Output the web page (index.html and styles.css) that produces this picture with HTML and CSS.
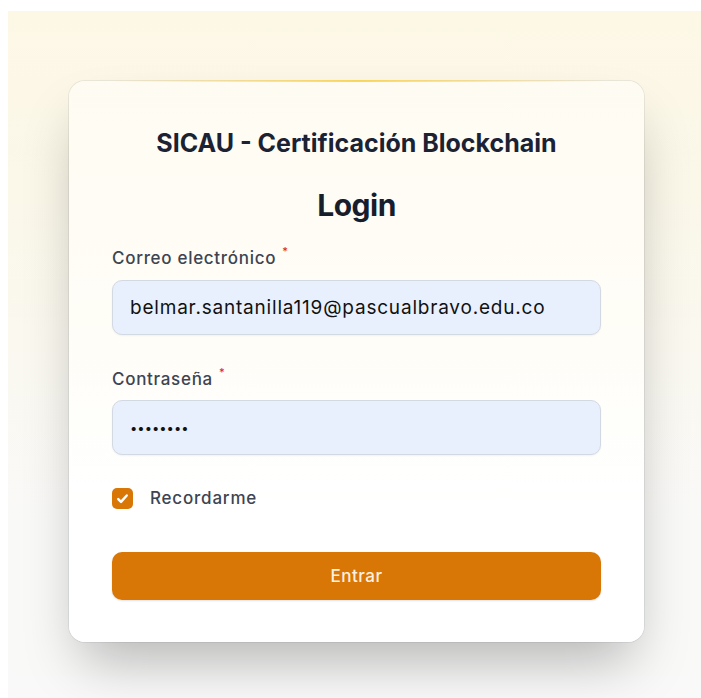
FILE: index.html
```html
<!DOCTYPE html>
<html lang="es">
<head>
<meta charset="utf-8">
<title>Login - SICAU</title>
<link rel="stylesheet" href="styles.css">
</head>
<body>
<div class="layout">
  <main class="card">
    <div class="brand">SICAU - Certificación Blockchain</div>
    <h1 class="heading">Login</h1>
    <form class="form">
      <div class="field">
        <label class="label" for="email">Correo electrónico<sup class="req">*</sup></label>
        <input class="input" id="email" type="email" value="belmar.santanilla119@pascualbravo.edu.co">
      </div>
      <div class="field field-gap">
        <label class="label" for="password">Contraseña<sup class="req">*</sup></label>
        <div class="input input-secret" id="password">••••••••</div>
      </div>
      <label class="remember">
        <span class="checkbox">
          <svg viewBox="0 0 16 16" width="17" height="17"><path d="M4 8.6l2.6 2.6 5.4-6" fill="none" stroke="#fff" stroke-width="2.3" stroke-linecap="round" stroke-linejoin="round"/></svg>
        </span>
        <span class="remember-text">Recordarme</span>
      </label>
      <button class="button" type="button">Entrar</button>
    </form>
  </main>
</div>
</body>
</html>
```
FILE: styles.css
```css
* { box-sizing: border-box; }

html, body { margin: 0; background: #ffffff; }

body {
  padding: 11px 0 0 8px;
  font-family: Inter, "Noto Sans", "Liberation Sans", sans-serif;
  color: #1a2232;
}

.layout {
  height: 687px;
  overflow: hidden;
  background: linear-gradient(to bottom, #fdf8e6 0%, #fbf7e9 25%, #faf8f0 50%, #f9f9f8 75%, #f9f9f9 100%);
  padding-top: 70px;
  padding-left: 61px;
}

.card {
  position: relative;
  width: 575px;
  height: 561px;
  border-radius: 16px;
  background: linear-gradient(to bottom, #fefcf2 0%, #fefdf7 45%, #ffffff 75%);
  box-shadow: 0 0 0 1px rgba(15, 23, 42, 0.07), 0 30px 55px -12px rgba(0, 0, 0, 0.28);
  padding: 46px 43px 42px;
  display: flex;
  flex-direction: column;
}

.card::before {
  content: "";
  position: absolute;
  left: 40px;
  right: 40px;
  top: -1px;
  height: 2px;
  background: linear-gradient(to right, rgba(252, 211, 77, 0), rgba(252, 211, 77, 0.9) 50%, rgba(252, 211, 77, 0));
}

.brand {
  text-align: center;
  font-size: 25px;
  line-height: 32px;
  font-weight: 700;
  color: #1b2233;
}

.heading {
  margin: 26px 0 0;
  text-align: center;
  font-size: 30px;
  line-height: 40px;
  font-weight: 700;
  letter-spacing: -0.5px;
  color: #161d2d;
}

.form {
  margin-top: 21px;
  display: flex;
  flex-direction: column;
}

.field {
  display: flex;
  flex-direction: column;
  gap: 10px;
}

.field-gap { margin-top: 32px; gap: 9px; }

.label {
  font-size: 17px;
  line-height: 24px;
  font-weight: 500;
  letter-spacing: 0.7px;
  color: #3d4452;
}

.req {
  color: #dc2626;
  font-size: 11px;
  margin-left: 6px;
  vertical-align: 9px;
  line-height: 0;
}

.input {
  display: block;
  width: 100%;
  height: 55px;
  border: 1px solid #d3d9e3;
  border-radius: 10px;
  background: #e8f0fe;
  box-shadow: 0 1px 2px rgba(0, 0, 0, 0.05);
  padding: 0 17px;
  font-family: inherit;
  font-size: 19px;
  letter-spacing: 0.8px;
  color: #111111;
  outline: none;
}

.input-secret {
  display: flex;
  align-items: center;
  font-size: 13px;
  letter-spacing: 0;
  color: #111;
}

.remember {
  margin-top: 31px;
  display: flex;
  align-items: center;
  gap: 17px;
  height: 24px;
}

.checkbox {
  width: 21px;
  height: 21px;
  border-radius: 5px;
  background: #d97706;
  display: flex;
  align-items: center;
  justify-content: center;
}

.remember-text {
  font-size: 17px;
  font-weight: 500;
  letter-spacing: 0.8px;
  color: #3d4452;
}

.button {
  margin-top: 42px;
  height: 48px;
  width: 100%;
  border: 0;
  border-radius: 10px;
  background: #d97706;
  box-shadow: 0 1px 2px rgba(0, 0, 0, 0.12);
  color: #fdf1e2;
  font-family: inherit;
  font-size: 17px;
  font-weight: 500;
  letter-spacing: 0.5px;
}
```
